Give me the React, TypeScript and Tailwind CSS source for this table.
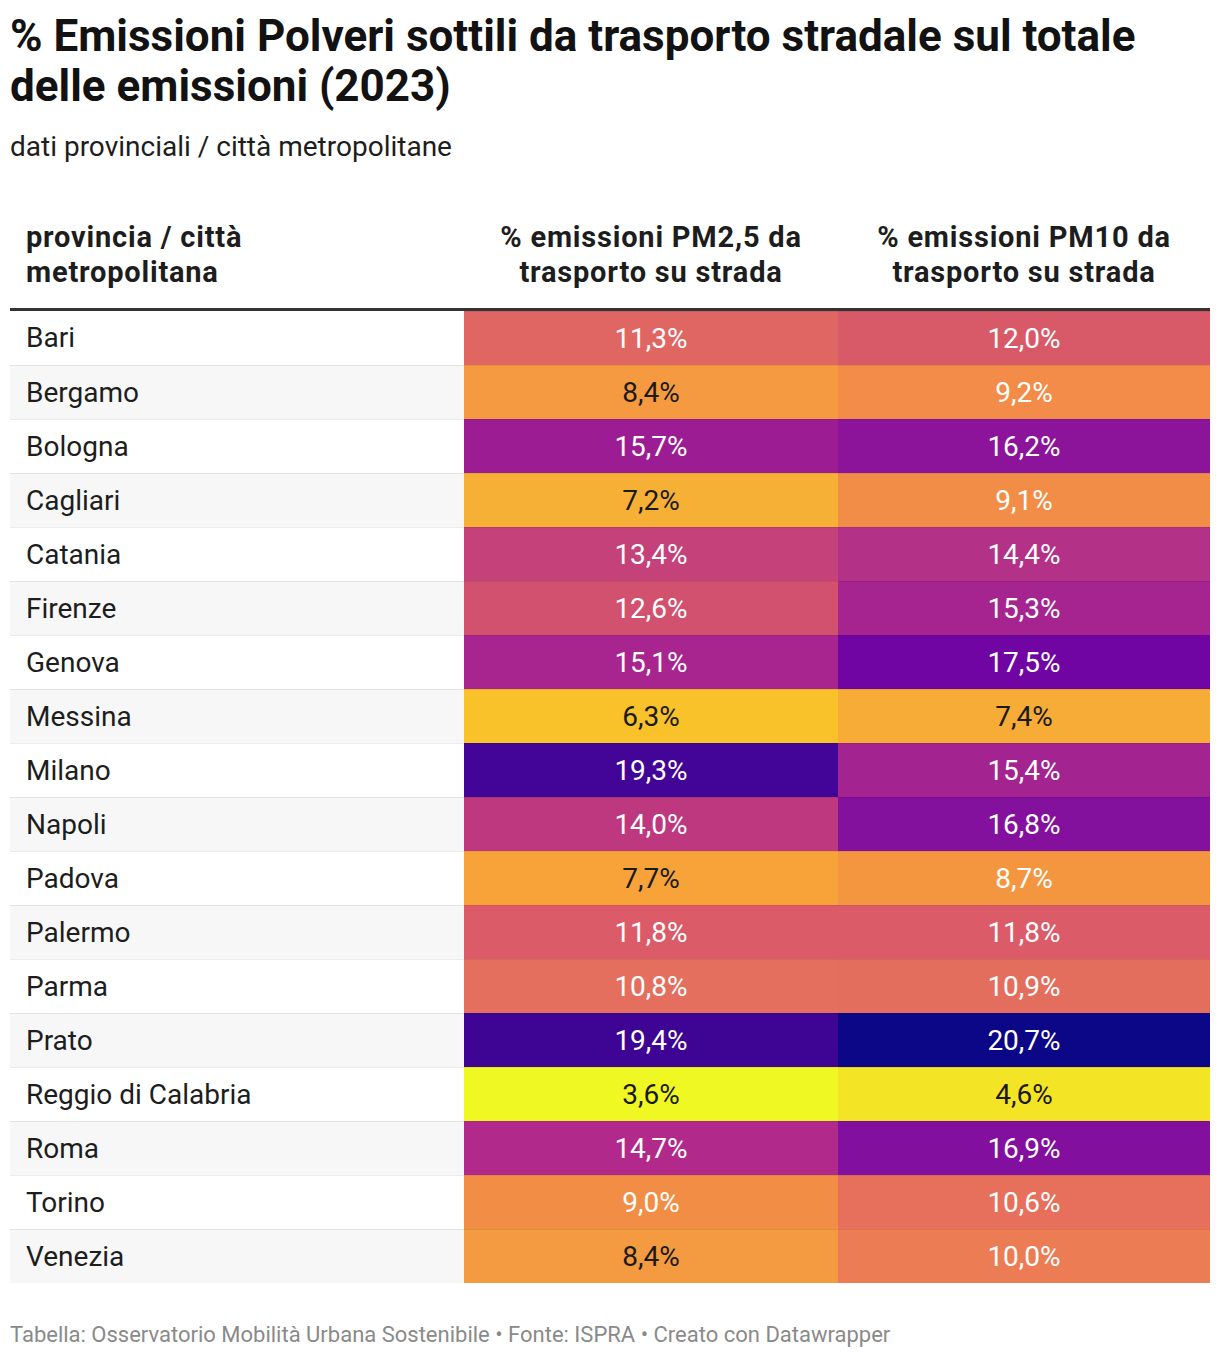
import React from "react";

type Cell = { v: string; bg: string; dark: boolean };
type Row = { name: string; a: Cell; b: Cell };

const rows: Row[] = [
  { name: "Bari", a: { v: "11,3%", bg: "bg-[#e06663]", dark: false }, b: { v: "12,0%", bg: "bg-[#d85a68]", dark: false } },
  { name: "Bergamo", a: { v: "8,4%", bg: "bg-[#f59a40]", dark: true }, b: { v: "9,2%", bg: "bg-[#f28c48]", dark: false } },
  { name: "Bologna", a: { v: "15,7%", bg: "bg-[#9c1d93]", dark: false }, b: { v: "16,2%", bg: "bg-[#8b149a]", dark: false } },
  { name: "Cagliari", a: { v: "7,2%", bg: "bg-[#f7b036]", dark: true }, b: { v: "9,1%", bg: "bg-[#f28d48]", dark: false } },
  { name: "Catania", a: { v: "13,4%", bg: "bg-[#c44179]", dark: false }, b: { v: "14,4%", bg: "bg-[#b33187]", dark: false } },
  { name: "Firenze", a: { v: "12,6%", bg: "bg-[#d2516e]", dark: false }, b: { v: "15,3%", bg: "bg-[#a52490]", dark: false } },
  { name: "Genova", a: { v: "15,1%", bg: "bg-[#a8258f]", dark: false }, b: { v: "17,5%", bg: "bg-[#7105a3]", dark: false } },
  { name: "Messina", a: { v: "6,3%", bg: "bg-[#f9c12a]", dark: true }, b: { v: "7,4%", bg: "bg-[#f6ac37]", dark: true } },
  { name: "Milano", a: { v: "19,3%", bg: "bg-[#430597]", dark: false }, b: { v: "15,4%", bg: "bg-[#a32390]", dark: false } },
  { name: "Napoli", a: { v: "14,0%", bg: "bg-[#bd387f]", dark: false }, b: { v: "16,8%", bg: "bg-[#84109e]", dark: false } },
  { name: "Padova", a: { v: "7,7%", bg: "bg-[#f7a33a]", dark: true }, b: { v: "8,7%", bg: "bg-[#f3963f]", dark: false } },
  { name: "Palermo", a: { v: "11,8%", bg: "bg-[#db5b68]", dark: false }, b: { v: "11,8%", bg: "bg-[#db5b68]", dark: false } },
  { name: "Parma", a: { v: "10,8%", bg: "bg-[#e56f5e]", dark: false }, b: { v: "10,9%", bg: "bg-[#e46e5e]", dark: false } },
  { name: "Prato", a: { v: "19,4%", bg: "bg-[#3e0493]", dark: false }, b: { v: "20,7%", bg: "bg-[#0c0786]", dark: false } },
  { name: "Reggio di Calabria", a: { v: "3,6%", bg: "bg-[#eff822]", dark: true }, b: { v: "4,6%", bg: "bg-[#f4e426]", dark: true } },
  { name: "Roma", a: { v: "14,7%", bg: "bg-[#b12a8b]", dark: false }, b: { v: "16,9%", bg: "bg-[#820f9e]", dark: false } },
  { name: "Torino", a: { v: "9,0%", bg: "bg-[#f28d46]", dark: false }, b: { v: "10,6%", bg: "bg-[#e6705b]", dark: false } },
  { name: "Venezia", a: { v: "8,4%", bg: "bg-[#f49a40]", dark: true }, b: { v: "10,0%", bg: "bg-[#ec7c54]", dark: false } },
];

function ValueCell({ c, w }: { c: Cell; w: string }) {
  return (
    <div
      className={`${w} ${c.bg} ${c.dark ? "text-[#1a1a1a]" : "text-white"} flex items-center justify-center border-t border-black/[0.07]`}
    >
      {c.v}
    </div>
  );
}

export default function App() {
  return (
    <div
      className="w-[1220px] bg-white px-[10px] pt-[11px] text-[#181818]"
      style={{ fontFamily: "Roboto, 'Liberation Sans', sans-serif" }}
    >
      <h1 className="text-[44px] font-bold leading-[50px] text-[#121212]">
        % Emissioni Polveri sottili da trasporto stradale sul totale delle emissioni (2023)
      </h1>
      <p className="mt-[20px] text-[28px] leading-[32px] text-[#1d1d1d]">
        dati provinciali / città metropolitane
      </p>

      <div className="mt-[37px] w-[1200px]">
        <div className="flex border-b-[3px] border-[#333333] text-[29px] font-bold leading-[35px] tracking-[0.8px] text-[#1d1d1d]">
          <div className="w-[454px] pl-[16px] pt-[20px] pb-[18px]">
            provincia / città
            <br />
            metropolitana
          </div>
          <div className="w-[374px] pt-[20px] pb-[18px] text-center">
            % emissioni PM2,5 da
            <br />
            trasporto su strada
          </div>
          <div className="w-[372px] pt-[20px] pb-[18px] text-center">
            % emissioni PM10 da
            <br />
            trasporto su strada
          </div>
        </div>

        {rows.map((r, i) => (
          <div key={r.name} className="flex h-[54px] text-[28px] leading-[32px]">
            <div
              className={`w-[454px] flex items-center pl-[16px] text-[#1d1d1d] ${
                i === 0 ? "" : "border-t border-black/[0.08]"
              } ${i % 2 === 0 ? "bg-white" : "bg-[#f7f7f7]"}`}
            >
              {r.name}
            </div>
            <ValueCell c={r.a} w="w-[374px]" />
            <ValueCell c={r.b} w="w-[372px]" />
          </div>
        ))}
      </div>

      <div className="mt-[40px] pb-[12px] text-[22px] leading-[24px] text-[#8a8a8a]">
        Tabella: Osservatorio Mobilità Urbana Sostenibile • Fonte: ISPRA • Creato con Datawrapper
      </div>
    </div>
  );
}
